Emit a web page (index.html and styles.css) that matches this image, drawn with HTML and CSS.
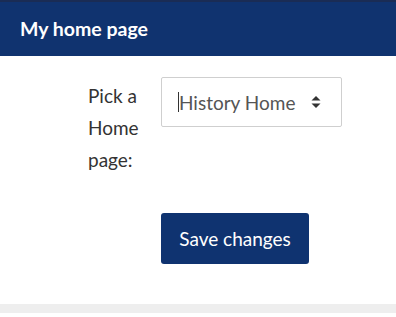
FILE: index.html
```html
<!DOCTYPE html>
<html>
<head>
<meta charset="utf-8">
<link rel="stylesheet" href="styles.css">
</head>
<body>
<div class="page">
  <div class="header">My home page</div>
  <div class="content">
    <div class="form-row">
      <label class="label">Pick a Home page:</label>
      <div class="select">
        <span class="caret"></span>
        <span class="select-text">History Home</span>
        <svg class="arrows" width="10" height="14" viewBox="0 0 10 14">
          <path d="M5 1 L9.5 5.5 L0.5 5.5 Z" fill="#333"/>
          <path d="M5 13 L9.5 8.5 L0.5 8.5 Z" fill="#333"/>
        </svg>
      </div>
    </div>
    <div class="button-row">
      <button class="save">Save changes</button>
    </div>
  </div>
  <div class="footer-band"></div>
</div>
</body>
</html>
```

FILE: styles.css
```css
html, body {
  margin: 0;
  padding: 0;
  background: #fff;
}
.page {
  font-family: Lato, "Open Sans", sans-serif;
  width: 396px;
  height: 317px;
  display: flex;
  flex-direction: column;
}
.header {
  height: 56px;
  background: #10336f;
  border-top: 2px solid #1a2c55;
  box-sizing: border-box;
  color: #fff;
  font-weight: 700;
  font-size: 19.5px;
  padding-left: 20px;
  padding-bottom: 2px;
  display: flex;
  align-items: center;
}
.content {
  flex: 1;
  padding: 21px 0 0 88px;
  box-sizing: border-box;
}
.form-row {
  display: flex;
  gap: 15px;
  align-items: flex-start;
}
.label {
  width: 58px;
  font-size: 19px;
  line-height: 32px;
  color: #333;
  padding-top: 3px;
}
.select {
  width: 181px;
  height: 50px;
  box-sizing: border-box;
  border: 1px solid #cfcfcf;
  border-radius: 2px;
  display: flex;
  align-items: center;
  padding-left: 16px;
  padding-right: 20px;
  position: relative;
}
.caret {
  width: 1px;
  height: 20px;
  background: #333;
}
.select-text {
  flex: 1;
  font-size: 19px;
  color: #555;
}
.arrows {
  display: block;
}
.button-row {
  margin-top: 37px;
  padding-left: 73px;
}
.save {
  width: 148px;
  height: 51px;
  background: #0f3370;
  color: #fff;
  border: none;
  border-radius: 3px;
  font-family: inherit;
  font-size: 19px;
  padding: 0;
}
.footer-band {
  height: 9px;
  background: #eeeeee;
  margin-bottom: 4px;
}
```
